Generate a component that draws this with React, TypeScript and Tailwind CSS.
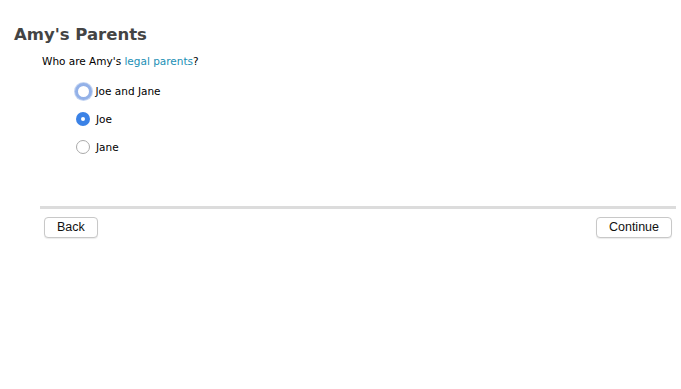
import React from "react";

export default function App() {
  return (
    <div className="w-[681px] h-[389px] bg-white font-['DejaVu_Sans',sans-serif]">
      <div className="pt-[24px] pl-[14px]">
        <h1 className="text-[16.5px] leading-[22px] font-bold text-[#444]">Amy's Parents</h1>
      </div>
      <div className="pl-[42px] pt-[8px] text-[10.5px] leading-[14px] text-black">
        Who are Amy's <span className="text-[#1a8fb5]">legal parents</span>?
      </div>
      <div className="pl-[76px] pt-[16px] flex flex-col gap-[14px] text-[10.5px] leading-[14px] text-black">
        <label className="flex items-center gap-[4px] h-[14px]">
          <span className="w-[17px] h-[17px] -ml-[1.5px] rounded-full border-[3.5px] border-[#93b1e8] bg-white shadow-[0_0_0_1px_#c3d4f2] box-border" />
          <span>Joe and Jane</span>
        </label>
        <label className="flex items-center gap-[6px] h-[14px]">
          <span className="w-[14px] h-[14px] rounded-full bg-[#3b82e6] flex items-center justify-center">
            <span className="w-[4px] h-[4px] rounded-full bg-white" />
          </span>
          <span>Joe</span>
        </label>
        <label className="flex items-center gap-[6px] h-[14px]">
          <span className="w-[14px] h-[14px] rounded-full border border-[#aaa] bg-white box-border" />
          <span>Jane</span>
        </label>
      </div>
      <div className="ml-[40px] mr-[5px] mt-[52px] h-[3px] bg-[#dcdcdc]" />
      <div className="flex justify-between pl-[44px] pr-[9px] pt-[8px] font-['Liberation_Sans',sans-serif]">
        <button className="h-[21px] px-[12px] rounded-[4px] border border-[#c8c8c8] bg-white text-[12.5px] text-[#111] shadow-[0_1px_1px_rgba(0,0,0,0.08)]">Back</button>
        <button className="h-[21px] px-[12px] rounded-[4px] border border-[#c8c8c8] bg-white text-[12.5px] text-[#111] shadow-[0_1px_1px_rgba(0,0,0,0.08)]">Continue</button>
      </div>
    </div>
  );
}
